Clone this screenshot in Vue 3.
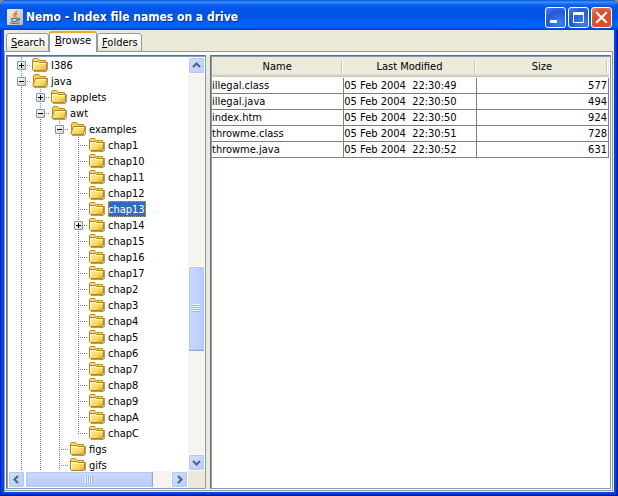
<script setup>
import { ref } from 'vue'

const tabs = ['Search', 'Browse', 'Folders']
const activeTab = ref('Browse')
const selected = ref('chap13')

// guides: one entry per indent column
//   v = line passes through, tee = line with branch, end = last branch,
//   plus / minus = expander
const chapters = [
  'chap1', 'chap10', 'chap11', 'chap12', 'chap13', 'chap14', 'chap15', 'chap16',
  'chap17', 'chap2', 'chap3', 'chap4', 'chap5', 'chap6', 'chap7', 'chap8',
  'chap9', 'chapA', 'chapC',
]
const rows = [
  { name: 'I386', guides: ['plus'] },
  { name: 'java', guides: ['minus'], open: true },
  { name: 'applets', guides: ['v', 'plus'] },
  { name: 'awt', guides: ['v', 'minus'], open: true },
  { name: 'examples', guides: ['v', 'v', 'minus'], open: true },
  ...chapters.map((name, i) => ({
    name,
    guides: ['v', 'v', 'v',
      name === 'chap14' ? 'plus' : i === chapters.length - 1 ? 'end' : 'tee'],
  })),
  { name: 'figs', guides: ['v', 'v', 'tee'] },
  { name: 'gifs', guides: ['v', 'v', 'tee'] },
]

const files = [
  ['illegal.class', '05 Feb 2004\u00a0 22:30:49', 577],
  ['illegal.java', '05 Feb 2004\u00a0 22:30:50', 494],
  ['index.htm', '05 Feb 2004\u00a0 22:30:50', 924],
  ['throwme.class', '05 Feb 2004\u00a0 22:30:51', 728],
  ['throwme.java', '05 Feb 2004\u00a0 22:30:52', 631],
]
</script>

<template>
  <div class="window">
    <header class="titlebar">
      <svg class="app-icon" width="16" height="16" viewBox="0 0 16 16">
        <defs>
          <linearGradient id="cupbg" x1="0" y1="0" x2="1" y2="1">
            <stop offset="0" stop-color="#f4f2ec" /><stop offset="1" stop-color="#b9b6ae" />
          </linearGradient>
        </defs>
        <rect width="16" height="16" rx="1" fill="url(#cupbg)" />
        <path d="M9.5 1.500C10 3.500 6 4.500 6.500 6.500C6.700 7.300 7.500 7.800 7.500 8.500M10.500 4C8.500 5 8.200 6 9 7C9.400 7.500 9 8 8.700 8.500" fill="none" stroke="#e8741c" stroke-width="1.300" />
        <path d="M4 9.500H10.500M4.500 9.500C4.500 11 5 12 6 12.500H9C10 12 10.500 11 10.500 9.500M10.800 9.500C13.500 9 13 11 10.500 11.500M3 13.500C5 14.700 10 14.700 12.500 13.500" fill="none" stroke="#4d7396" stroke-width="1.200" />
      </svg>
      <h1>Nemo - Index file names on a drive</h1>
      <div class="caption-buttons">
        <button type="button" aria-label="Minimize">
          <svg width="19" height="19" viewBox="0 0 19 19"><rect x="4" y="12" width="7" height="3" fill="#fff" /></svg>
        </button>
        <button type="button" aria-label="Maximize">
          <svg width="19" height="19" viewBox="0 0 19 19"><path d="M4 4H15V15H4ZM5 7V14H14V7Z" fill="#fff" fill-rule="evenodd" /></svg>
        </button>
        <button type="button" class="close" aria-label="Close">
          <svg width="19" height="19" viewBox="0 0 19 19"><path d="M5 5L14 14M14 5L5 14" stroke="#fff" stroke-width="2.200" stroke-linecap="square" /></svg>
        </button>
      </div>
    </header>

    <main class="client">
      <nav class="tabs" role="tablist">
        <button
          v-for="t in tabs" :key="t" type="button" role="tab" class="tab"
          :class="{ active: t === activeTab }" :aria-selected="t === activeTab"
          @click="activeTab = t"
        ><span><u>{{ t[0] }}</u>{{ t.slice(1) }}</span></button>
      </nav>

      <section class="pane">
        <div class="scroll-box tree-box">
          <ul class="tree">
            <li v-for="r in rows" :key="r.name">
              <span v-for="(g, i) in r.guides" :key="i" class="guide" :class="g">
                <button v-if="g === 'plus' || g === 'minus'" type="button" class="expander" :aria-label="g === 'plus' ? 'Expand' : 'Collapse'">
                  <svg width="7" height="7" viewBox="0 0 7 7"><path :d="g === 'plus' ? 'M1 3H6V4H1ZM3 1H4V6H3Z' : 'M1 3H6V4H1Z'" fill="#000" /></svg>
                </button>
              </span>
              <svg class="folder" width="16" height="16" viewBox="0 0 16 16">
                <path d="M2 14.500H14.500L15.500 13V5" fill="none" stroke="#77766c" stroke-opacity=".7" />
                <template v-if="r.open">
                  <path d="M1.500 12V3L2.500 1.500H6.500L8 3.500H13.500V6" fill="#f3d054" stroke="#c08a1c" />
                  <path d="M.800 12.500L3.500 5.500H15.200L13.500 13.500H1.500Z" fill="url(#gold)" stroke="#b8801a" />
                  <path d="M4 6.500H14" stroke="#fffbd0" />
                </template>
                <template v-else>
                  <path d="M.500 12V3L1.500 1.500H5.500L7 3.500H13.500V6" fill="#f7dc6a" stroke="#c08a1c" />
                  <path d="M.500 12.500V4.500H6L7.500 5.500H14.500V12.500L13.500 13.500H1.500Z" fill="url(#gold)" stroke="#b8801a" />
                  <path d="M1.500 12V5.500H6L7.500 6.500H13.500" fill="none" stroke="#fffbd0" />
                </template>
              </svg>
              <button type="button" class="label" :class="{ selected: r.name === selected }" @click="selected = r.name">{{ r.name }}</button>
            </li>
          </ul>
          <div class="bar vertical">
            <button type="button" class="arrow" aria-label="Scroll up"><svg width="9" height="9" viewBox="0 0 9 9"><path d="M1 6L4.500 2.500L8 6" /></svg></button>
            <div class="track">
              <span class="before" />
              <div class="thumb"><i /></div>
              <span class="after" />
            </div>
            <button type="button" class="arrow" aria-label="Scroll down"><svg width="9" height="9" viewBox="0 0 9 9"><path d="M1 3L4.500 6.500L8 3" /></svg></button>
          </div>
          <div class="bar horizontal">
            <button type="button" class="arrow" aria-label="Scroll left"><svg width="9" height="9" viewBox="0 0 9 9"><path d="M6 1L2.500 4.500L6 8" /></svg></button>
            <div class="track">
              <div class="thumb"><i /></div>
              <span class="after" />
            </div>
            <button type="button" class="arrow" aria-label="Scroll right"><svg width="9" height="9" viewBox="0 0 9 9"><path d="M3 1L6.500 4.500L3 8" /></svg></button>
          </div>
        </div>

        <div class="scroll-box list-box">
          <table>
            <thead>
              <tr><th scope="col"><span>Name</span></th><th scope="col"><span>Last Modified</span></th><th scope="col"><span>Size</span></th></tr>
            </thead>
            <tbody>
              <tr v-for="f in files" :key="f[0]">
                <td>{{ f[0] }}</td><td>{{ f[1] }}</td><td class="num">{{ f[2] }}</td>
              </tr>
            </tbody>
          </table>
        </div>
      </section>
    </main>

    <svg class="defs" width="0" height="0" aria-hidden="true">
      <defs>
        <linearGradient id="gold" x1="0" y1="0" x2="1" y2="1">
          <stop offset="0" stop-color="#fff3a0" /><stop offset=".6" stop-color="#f9d860" /><stop offset="1" stop-color="#e0a52c" />
        </linearGradient>
      </defs>
    </svg>
  </div>
</template>

<style>
body {
  margin: 0;
  background: #8a8878;
}
</style>

<style scoped>
* {
  box-sizing: border-box;
}
.window {
  height: 100vh;
  display: flex;
  flex-direction: column;
  padding: 0 4px 4px;
  border-radius: 7px 7px 0 0;
  overflow: hidden;
  background: #0046e0;
  box-shadow: inset 1px 0 #0019cf, inset -1px -1px #001590, inset -2px -2px #0030c8;
  font: 11px/16px "DejaVu Sans Condensed", "DejaVu Sans", Tahoma, sans-serif;
  color: #000;
}
button {
  font: inherit;
  color: inherit;
  margin: 0;
  padding: 0;
  border: 0;
  background: none;
}
svg {
  display: block;
  flex: none;
}
.defs {
  position: absolute;
}
.titlebar {
  flex: none;
  height: 30px;
  margin: 0 -4px;
  padding: 4px 6px 0 7px;
  display: flex;
  align-items: center;
  gap: 3px;
  background: linear-gradient(#0a50d8 0, #3a90ff 2px, #0a60f0 5px, #0055e3 9px, #0055e5 17px, #0164fd 25px, #0060f6 27px, #0040c4 30px);
}
h1 {
  flex: 1;
  margin: 0;
  font-size: 12px;
  line-height: 20px;
  font-weight: bold;
  color: #fff;
  text-shadow: 1px 1px #0a2a80;
  white-space: nowrap;
}
.caption-buttons {
  display: flex;
  gap: 2px;
}
.caption-buttons button {
  width: 21px;
  height: 21px;
  border: 1px solid #fff;
  border-radius: 3px;
  background: radial-gradient(circle at 70% 80%, #3c80f5, #2458d8 60%, #5080ea);
}
.caption-buttons .close {
  background: radial-gradient(circle at 60% 70%, #e04a20, #d8512f 60%, #e98a70);
}
.client {
  flex: 1;
  min-height: 0;
  display: flex;
  flex-direction: column;
  padding: 1px 1px 1px 0;
  background: #ece9d8;
}
.tabs {
  flex: none;
  height: 21px;
  display: flex;
  align-items: flex-end;
  padding-left: 2px;
  margin-bottom: -1px;
}
.tab {
  position: relative;
  height: 19px;
  padding: 1px 3px 0 4px;
  border: 1px solid #919b9c;
  border-radius: 3px 3px 0 0;
  background: linear-gradient(#fff, #f3f2ea 70%, #e2dfd2);
  line-height: 16px;
}
.tab.active {
  height: 21px;
  padding: 0 5px 3px;
  border-width: 2px 1px 0;
  border-top-color: #f5a623;
  background: #fcfcfe;
}
.pane {
  flex: 1;
  min-height: 0;
  display: grid;
  grid-template-columns: 200px minmax(0, 1fr);
  gap: 4px;
  padding: 3px 1px 1px;
  border: 1px solid #919b9c;
  background: linear-gradient(#ece9d8, #ece9d8) 201px 3px / 4px 100% no-repeat, #fcfcfe;
}
.scroll-box {
  min-width: 0;
  min-height: 0;
  border: 1px solid #7f9db9;
  border-top-color: #716f64;
  border-left-color: #716f64;
  box-shadow: inset 1px 1px #7f9db9;
  padding: 1px 0 0 1px;
  background: #fff;
}
.list-box {
  padding-right: 1px;
}
.tree-box {
  display: grid;
  grid-template-columns: minmax(0, 1fr) 17px;
  grid-template-rows: minmax(0, 1fr) 17px;
  background: linear-gradient(#ece9d8, #ece9d8) 100% 100% / 17px 17px no-repeat, #fff;
}
.tree {
  margin: 0;
  padding: 0 0 0 4px;
  list-style: none;
  overflow: hidden;
}
.tree li {
  display: flex;
  height: 16px;
  white-space: nowrap;
}
.guide {
  flex: none;
  width: 19px;
  padding: 4px 0 0 5px;
  --dots-v: repeating-linear-gradient(#808080 0 1px, transparent 1px 2px);
  --dots-h: repeating-linear-gradient(90deg, #808080 0 1px, transparent 1px 2px);
  background-repeat: no-repeat;
}
.guide.v {
  background-image: var(--dots-v);
  background-size: 1px 100%;
  background-position: 9px 0;
}
.guide.tee,
.guide.plus,
.guide.minus {
  background-image: var(--dots-v), var(--dots-h);
  background-size: 1px 100%, 10px 1px;
  background-position: 9px 0, 9px 8px;
}
.guide.end {
  background-image: var(--dots-v), var(--dots-h);
  background-size: 1px 8px, 10px 1px;
  background-position: 9px 0, 9px 8px;
}
.expander {
  display: block;
  width: 9px;
  height: 9px;
  border: 1px solid #7898b5;
  border-radius: 1px;
  background: linear-gradient(135deg, #fff, #d4d0c4);
}
.folder {
  margin: 0 3px 0 1px;
}
.label {
  padding: 2px 1px 0 0;
  line-height: 14px;
}
.label.selected {
  background: #316ac5;
  color: #fff;
  outline: 1px dotted #e0a030;
  outline-offset: -1px;
}
.bar {
  display: flex;
  background: #f5f4ee;
}
.vertical {
  flex-direction: column;
}
.horizontal {
  flex-direction: row;
}
.track {
  flex: 1;
  min-width: 0;
  min-height: 0;
  display: flex;
  flex-direction: inherit;
}
.arrow,
.thumb {
  border: 1px solid #fff;
  border-radius: 2px;
  background: linear-gradient(135deg, #d3e0ff, #b8ccfa);
  box-shadow: inset 0 0 0 1px #b4c8f6;
  display: grid;
  place-items: center;
}
.arrow {
  flex: none;
  width: 17px;
  height: 17px;
}
.arrow path {
  fill: none;
  stroke: #4d6185;
  stroke-width: 2;
}
.vertical .before {
  flex: 192;
}
.vertical .thumb {
  flex: 84;
  background: linear-gradient(90deg, #cad8fe, #b9cbfb);
  border-bottom-color: #8ea6d8;
}
.vertical .after {
  flex: 103;
}
.horizontal .thumb {
  flex: 128;
  background: linear-gradient(#cad8fe, #b9cbfb);
  border-right-color: #8ea6d8;
}
.horizontal .after {
  flex: 18;
}
.vertical i {
  width: 7px;
  height: 8px;
  background: repeating-linear-gradient(#f4f8ff 0 1px, #9ab2ea 1px 2px);
}
.horizontal i {
  width: 8px;
  height: 7px;
  background: repeating-linear-gradient(90deg, #f4f8ff 0 1px, #9ab2ea 1px 2px);
}
table {
  width: 100%;
  table-layout: fixed;
  border-collapse: separate;
  border-spacing: 0;
}
th {
  height: 21px;
  padding: 3px 0 5px;
  font-weight: normal;
  line-height: 13px;
  background: linear-gradient(#ebeadb 17px, #e2decd 17px 18px, #d6d2c2 18px 19px, #cbc7b8 19px 20px, #fff 20px);
}
th span {
  display: block;
  border-right: 1px solid #fff;
  margin-right: 1px;
  box-shadow: inset -1px 0 #c7c5b2;
}
td {
  height: 16px;
  padding: 0 1px 0 0;
  border-right: 1px solid #808080;
  border-bottom: 1px solid #808080;
  line-height: 15px;
  white-space: nowrap;
  overflow: hidden;
}
.num {
  text-align: right;
}
</style>
